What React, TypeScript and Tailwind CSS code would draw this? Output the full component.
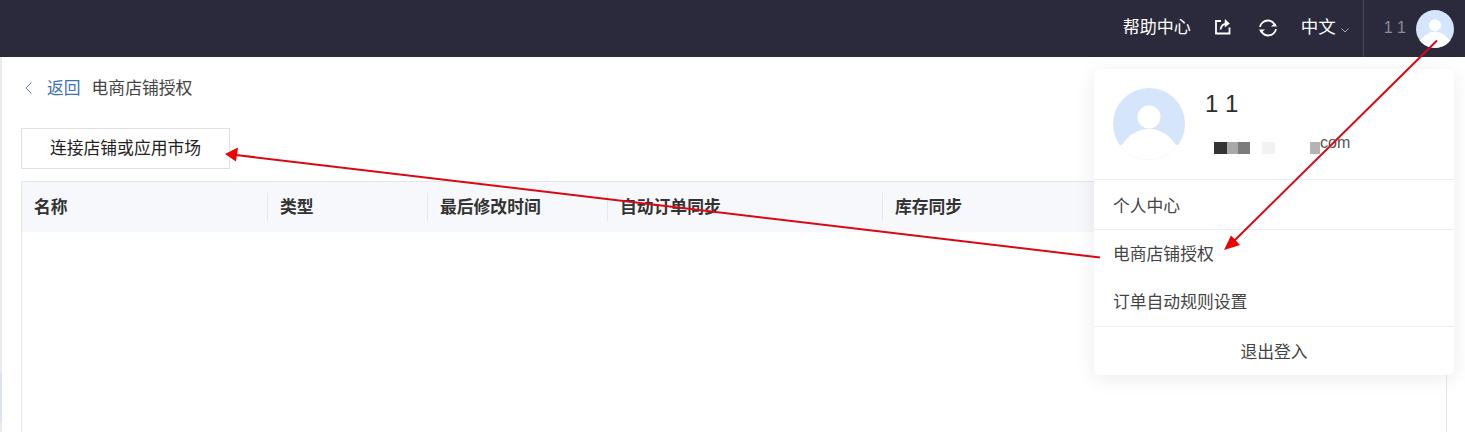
import React from "react";

const font = { fontFamily: '"Noto Sans CJK SC", "Liberation Sans", sans-serif' };
const latin = { fontFamily: '"Liberation Sans", sans-serif' };

function Avatar({ size }: { size: number }) {
  return (
    <svg width={size} height={size} viewBox="0 0 72 72" className="block shrink-0">
      <defs>
        <clipPath id={`c${size}`}>
          <circle cx="36" cy="36" r="36" />
        </clipPath>
      </defs>
      <circle cx="36" cy="36" r="36" fill="#d5e5fb" />
      <g clipPath={`url(#c${size})`}>
        <circle cx="36" cy="29" r="11.5" fill="#fff" />
        <path d="M9 57 C15 47 25 41 36 41 C47 41 57 47 63 57 L72 57 L72 72 L0 72 L0 57 Z" fill="#fff" />
      </g>
    </svg>
  );
}

const columns = [
  { label: "名称", w: "w-[245px]" },
  { label: "类型", w: "w-[160px]" },
  { label: "最后修改时间", w: "w-[180px]" },
  { label: "自动订单同步", w: "w-[275px]" },
  { label: "库存同步", w: "flex-1" },
];

const blur = [
  ["w-[13px]", "bg-[#333333]"],
  ["w-[11px]", "bg-[#a8a8a8]"],
  ["w-[12px]", "bg-[#7c7c7c]"],
  ["w-[12px]", "bg-white"],
  ["w-[13px]", "bg-[#f2f2f2]"],
  ["w-[35px]", "bg-white"],
  ["w-[10px]", "bg-[#b4b4b4]"],
];

export default function App() {
  return (
    <div className="relative h-[432px] w-[1465px] overflow-hidden bg-white" style={font}>
      <header className="flex h-[57px] items-center justify-end bg-[#2a2a3c] text-white">
        <span className="mb-[6px] text-[17px] leading-none">帮助中心</span>
        <svg width="18" height="18" viewBox="0 0 18 18" fill="none" stroke="#fff" strokeWidth="1.800" className="mb-[4px] ml-[23px]">
          <path d="M7 3H2V15.500H15.500V9.500" />
          <path d="M6.500 11.500C7 7.500 9.500 5.500 14 5.500" />
          <path d="M11 1.500L15.500 5.500L11 9Z" fill="#fff" strokeWidth="0.500" />
        </svg>
        <svg width="20" height="20" viewBox="0 0 20 20" fill="none" stroke="#fff" strokeWidth="1.800" className="mb-[2px] ml-[26px]">
          <path d="M2 9C2.500 5.200 6 2.500 9.800 2.500C12.800 2.500 15.300 4.200 16.800 7" />
          <path d="M18 11C17.500 14.800 14 17.500 10.200 17.500C7.200 17.500 4.700 15.800 3.200 13" />
          <path d="M13 8.500H19L17 5Z" fill="#fff" stroke="none" />
          <path d="M7 11.500H1L3 15Z" fill="#fff" stroke="none" />
        </svg>
        <span className="mb-[6px] ml-[23px] text-[17.500px] leading-none">中文</span>
        <svg width="8" height="5" viewBox="0 0 8 5" fill="none" stroke="#a8a8b2" strokeWidth="1" className="ml-[5px] mt-[3px]">
          <path d="M0.500 0.500L4 4L7.500 0.500" />
        </svg>
        <div className="ml-[14px] flex h-full items-center border-l border-[#474758] pl-[20px] pr-[11px]">
          <span className="mb-[1px] mr-[10px] text-[16px] text-[#8c8c98]" style={latin}>
            1 1
          </span>
          <Avatar size={38} />
        </div>
      </header>

      <main className="flex h-[375px] border-l-2 border-[#ececec]">
        <div className="flex-1 pl-[19px] pr-[18px]">
          <div className="flex h-[62px] items-center pb-[1px] text-[16.800px]">
            <svg width="10" height="14" viewBox="0 0 10 14" fill="none" stroke="#4a7fc1" strokeWidth="1" className="ml-[3px]">
              <path d="M7.500 1.500L2 7L7.500 12.500" />
            </svg>
            <span className="ml-[13px] text-[#3f73b5]">返回</span>
            <span className="ml-[11px] text-[#444444]">电商店铺授权</span>
          </div>
          <button className="mt-[9px] flex h-[41px] w-[209px] items-center justify-center border border-[#e0e0e0] bg-white pb-[2px] text-[16.800px] text-[#222222]">
            连接店铺或应用市场
          </button>
          <section className="mt-[12px] h-[300px] border border-b-0 border-[#e4e6eb]">
            <div className="flex h-[50px] items-center bg-[#f7f8fb] text-[16.800px] font-bold text-[#333333]">
              {columns.map((c, i) => (
                <div key={c.label} className={`flex h-[28px] items-center pb-[1px] pl-[12px] ${c.w} ${i > 0 ? "border-l border-[#e7e8ec]" : ""}`}>
                  {c.label}
                </div>
              ))}
            </div>
          </section>
        </div>
      </main>

      <div className="absolute left-0 top-[373px] h-[50px] w-[2px] bg-[#dbe3f3]" />

      <aside className="absolute left-[1094px] top-[69px] w-[360px] rounded-[6px] bg-white text-[16.800px] text-[#444444] shadow-[0_4px_20px_rgba(0,0,0,0.08)]">
        <div className="flex h-[111px] border-b border-[#eeeeee] pl-[19px] pt-[19px]">
          <Avatar size={72} />
          <div className="ml-[20px]">
            <div className="mt-[1px] text-[24px] leading-[30px] text-[#2e2e2e]" style={latin}>
              1 1
            </div>
            <div className="mt-[10px] flex h-[20px] items-center">
              <div className="ml-[9px] mt-[17px] flex h-[12px]">
                {blur.map(([w, c], i) => (
                  <span key={i} className={`${w} ${c} h-full`} />
                ))}
              </div>
              <span className="mt-[8px] text-[16px] leading-none text-[#555555]" style={latin}>
                com
              </span>
            </div>
          </div>
        </div>
        <div className="flex h-[50px] items-center border-b border-[#eeeeee] pt-[3px] pl-[19px]">个人中心</div>
        <div className="flex h-[48px] items-center pb-[1px] pl-[19px]">电商店铺授权</div>
        <div className="flex h-[49px] items-center border-b border-[#eeeeee] pl-[19px]">订单自动规则设置</div>
        <div className="flex h-[48px] items-center justify-center pt-[2px]">退出登入</div>
      </aside>

      <svg width="1465" height="432" className="pointer-events-none absolute left-0 top-0">
        <g stroke="#d90812" strokeWidth="2" fill="none">
          <path d="M1100 257.500 L236 155" />
          <path d="M1437 40.500 L1234 241" />
        </g>
        <g fill="#ee0000">
          <path d="M225 154 L238 147.500 L236 161.500 Z" />
          <path d="M1224 250 L1231 235.500 L1240 245 Z" />
        </g>
      </svg>
    </div>
  );
}
